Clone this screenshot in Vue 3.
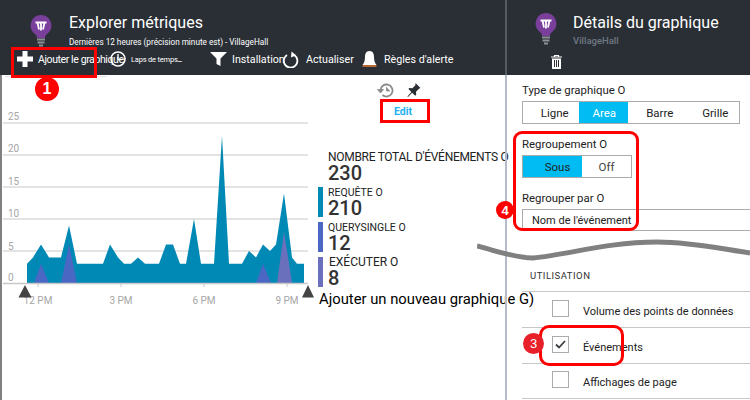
<script setup>
// valeurs lues sur le graphique : [x, valeur]
const total = [[27,3],[33,4],[41,6],[49,4],[61,4],[69,9],[77,3],[103,3],[110,6],[118,4],[124,3],[131,3],[138,4],[145,3],[159,3],[166,6],[173,6],[180,3],[186,3],[194,10],[201,3],[214,3],[222,23],[229,3],[242,3],[249,5],[256,4],[263,6],[270,5],[276,6],[284,14],[292,4],[297,3],[304,3]];
const peaks = [
  { from: 34, top: 41, to: 49, value: 3, color: "#4a67c4" },
  { from: 61, top: 69, to: 77, value: 6, color: "#4a67c4" },
  { from: 256, top: 263, to: 271, value: 3, color: "#4a67c4" },
  { from: 277, top: 284, to: 292, value: 8, color: "#6a70bb" },
];
const BASE = 283;
const UNIT = 6.4;
const y = (v) => BASE - v * UNIT;
const areaPoints = `27,${BASE} ` + total.map(([x, v]) => `${x},${y(v)}`).join(" ") + ` 304,${BASE}`;
const grid = [5, 10, 15, 20, 25].map(y);
const yLabels = [
  { t: "25", y: 120 }, { t: "20", y: 152 }, { t: "15", y: 185 },
  { t: "10", y: 217 }, { t: "5", y: 250 }, { t: "0", y: 281 },
];
const xLabels = [{ t: "12 PM", x: 38 }, { t: "3 PM", x: 121 }, { t: "6 PM", x: 204 }, { t: "9 PM", x: 287 }];
const legend = [
  { name: "REQUÊTE O", value: 210, color: "#0089b5" },
  { name: "QUERYSINGLE O", value: 12, color: "#4a67c4" },
  { name: "EXÉCUTER O", value: 8, color: "#6a70bb", large: true },
];
const chartTypes = ["Ligne", "Area", "Barre", "Grille"];
const usage = [
  { name: "Volume des points de données", checked: false },
  { name: "Événements", checked: true },
  { name: "Affichages de page", checked: false },
];
</script>

<template>
  <div class="page">
    <section class="blade blade-left">
      <header class="head">
        <div class="head-top">
          <svg class="bulb" width="22" height="34" viewBox="0 0 22 34">
            <path d="M11 1a10.500 10.500 0 0 0-6 19c1.500 1.200 2 2.500 2 4h8c0-1.500.5-2.800 2-4a10.500 10.500 0 0 0-6-19z" fill="#7a3f9a" />
            <path d="M5.500 8.500h11M7.500 8.500l1.500 7M14.500 8.500l-1.500 7M11 8.500v8" stroke="#fff" stroke-width="1.800" fill="none" />
            <path d="M7 25.500h8M7.500 28.500h7M9 31.500h4" stroke="#8b9096" stroke-width="2" />
          </svg>
          <div class="titles">
            <div class="title">Explorer métriques</div>
            <div class="subtitle">Dernières 12 heures (précision minute est) - VillageHall</div>
          </div>
        </div>
        <div class="toolbar">
          <div class="tool tool-add">
            <svg width="16" height="16" viewBox="0 0 16 16"><path d="M8 0v16M0 8h16" stroke="#fff" stroke-width="5" /></svg>
            <span class="tool-label add-label">Ajouter le graphique</span>
          </div>
          <div class="tool tool-time">
            <svg width="16" height="16" viewBox="0 0 16 16"><circle cx="8" cy="8" r="7" fill="none" stroke="#fff" stroke-width="1.600" /><path d="M8 3v5.500h4" fill="none" stroke="#fff" stroke-width="1.400" /></svg>
            <span class="time-label">Laps de temps</span>
            <span class="time-mark">_</span>
          </div>
          <div class="tool tool-filter">
            <svg width="17" height="14" viewBox="0 0 17 14"><path d="M0 0h17l-6.500 6.500V14l-4-2V6.500z" fill="#fff" /></svg>
            <span class="tool-label">Installation</span>
          </div>
          <div class="tool tool-refresh">
            <svg width="16" height="17" viewBox="0 0 16 17"><path d="M11.500 4.200A6.800 6.800 0 1 1 4 4" fill="none" stroke="#fff" stroke-width="1.800" /><path d="M8.500 0.500l4.500 3.700-5 2.300z" fill="#fff" /></svg>
            <span class="tool-label">Actualiser</span>
          </div>
          <div class="tool tool-bell">
            <svg width="15" height="17" viewBox="0 0 15 17"><path d="M7.500 0C4 0 3 3 3 6c0 4-1 6-2.500 8h14C13 12 12 10 12 6c0-3-1-6-4.500-6z" fill="#fff" /><path d="M0.500 15h14" stroke="#d9763a" stroke-width="1.600" /></svg>
            <span class="tool-label">Règles d'alerte</span>
          </div>
        </div>
      </header>

      <div class="content">
        <svg class="chart" width="316" height="245" viewBox="0 75 316 245">
          <line x1="5" x2="107" y1="76.500" y2="76.500" stroke="#e4e4e4" />
          <line v-for="g in grid" :key="g" x1="3" x2="308" :y1="g" :y2="g" stroke="#c8c8c8" stroke-width="1" />
          <polygon :points="areaPoints" fill="#0089b5" />
          <polygon
            v-for="p in peaks"
            :key="p.from"
            :points="`${p.from},${BASE} ${p.top},${y(p.value)} ${p.to},${BASE}`"
            :fill="p.color"
          />
          <line x1="3" x2="308" y1="283.500" y2="283.500" stroke="#c8c8c8" stroke-width="1.500" />
          <text v-for="l in yLabels" :key="l.t" x="8" :y="l.y" class="axis">{{ l.t }}</text>
          <g v-for="l in xLabels" :key="l.t">
            <line :x1="l.x" :x2="l.x" y1="284" y2="287" stroke="#c8c8c8" />
            <text :x="l.x" y="304" text-anchor="middle" class="axis">{{ l.t }}</text>
          </g>
          <polygon points="25,285 18.500,297.500 31.500,297.500" fill="#444" />
          <polygon points="308,285 302,297.500 314,297.500" fill="#444" />
        </svg>

        <div class="side">
          <div class="chart-tools">
            <svg width="17" height="15" viewBox="0 0 17 15"><path d="M3.500 7.500a6 6 0 1 1 2 4.500" fill="none" stroke="#8a8a8a" stroke-width="1.800" /><path d="M0.500 6.500h6L3.500 10zM9.500 4v4h3.500" fill="#8a8a8a" stroke="#8a8a8a" stroke-width="0.800" /></svg>
            <svg width="14" height="15" viewBox="0 0 14 15"><path d="M8.500 0l5 5-1.500.8-3 3 .2 3-1 1-3-3L1 14l-.6-.5 4-4.500-3-3 1-1 3 .2 3-3z" fill="#2a2f35" /></svg>
          </div>
          <div class="edit">Edit</div>
          <div class="legend">
            <div class="legend-total">
              <div class="legend-name total-name">NOMBRE TOTAL D'ÉVÉNEMENTS O</div>
              <div class="legend-value">230</div>
            </div>
            <div v-for="item in legend" :key="item.name" class="legend-row">
              <i class="legend-bar" :style="{ background: item.color }"></i>
              <div>
                <div class="legend-name" :class="{ 'name-large': item.large }">{{ item.name }}</div>
                <div class="legend-value">{{ item.value }}</div>
              </div>
            </div>
          </div>
          <div class="add-chart">Ajouter un nouveau graphique G)</div>
        </div>
      </div>
    </section>

    <section class="blade blade-right">
      <header class="head head-right">
        <div class="head-top">
          <svg class="bulb" width="22" height="34" viewBox="0 0 22 34">
            <path d="M11 1a10.500 10.500 0 0 0-6 19c1.500 1.200 2 2.500 2 4h8c0-1.500.5-2.800 2-4a10.500 10.500 0 0 0-6-19z" fill="#7a3f9a" />
            <path d="M5.500 8.500h11M7.500 8.500l1.500 7M14.500 8.500l-1.500 7M11 8.500v8" stroke="#fff" stroke-width="1.800" fill="none" />
            <path d="M7 25.500h8M7.500 28.500h7M9 31.500h4" stroke="#8b9096" stroke-width="2" />
          </svg>
          <div class="titles">
            <div class="title">Détails du graphique</div>
            <div class="resource">VillageHall</div>
          </div>
        </div>
        <svg class="trash" width="11" height="14" viewBox="0 0 11 14"><path d="M0 2h11M3.500 2V.5h4V2" fill="none" stroke="#fff" stroke-width="1.200" /><path d="M1 3.500h9V14H1z" fill="#fff" /><path d="M3.500 5v7M5.500 5v7M7.500 5v7" stroke="#2a2f35" stroke-width="1" /></svg>
      </header>

      <div class="form">
        <div class="field-label">Type de graphique O</div>
        <div class="segments">
          <div v-for="t in chartTypes" :key="t" class="segment" :class="{ active: t === 'Area' }">{{ t }}</div>
        </div>
        <div class="field-label group-label">Regroupement O</div>
        <div class="segments segments-small">
          <div class="segment on-dark">Sous</div>
          <div class="segment off">Off</div>
        </div>
        <div class="field-label by-label">Regrouper par O</div>
        <div class="select">Nom de l'événement</div>

        <div class="usage-title">UTILISATION</div>
        <div v-for="u in usage" :key="u.name" class="usage-row">
          <span class="check">
            <svg v-if="u.checked" width="11" height="9" viewBox="0 0 11 9"><path d="M1 4.500l3 3 6-6.500" fill="none" stroke="#3a3f45" stroke-width="1.800" /></svg>
          </span>
          <span class="usage-name">{{ u.name }}</span>
        </div>
      </div>
    </section>

    <!-- annotations posées par-dessus la capture -->
    <svg class="wave" width="280" height="30" viewBox="0 0 280 30">
      <path d="M0 11C20 16 38 23 56 23C90 20 130 7 180 7C215 7 245 14 273 18" fill="none" stroke="#808080" stroke-width="5" />
    </svg>
    <div class="mark mark-add"></div>
    <div class="mark mark-edit"></div>
    <div class="mark mark-group"></div>
    <div class="mark mark-events"></div>
    <div class="badge badge-1">1</div>
    <div class="badge badge-4">4</div>
    <div class="badge badge-3">3</div>
  </div>
</template>

<style>
html, body { margin: 0; background: #fff; }
</style>

<style scoped>
.page { position: relative; display: flex; width: 750px; height: 400px; overflow: hidden; background: #fff; font-family: Roboto, "Liberation Sans", sans-serif; color: #222; }
.blade { display: flex; flex-direction: column; }
.blade-left { width: 505px; flex: none; }
.blade-right { flex: 1; min-width: 0; }
.head { background: #2a2f35; height: 75px; flex: none; color: #fff; }
.head-right { border-left: 2px solid #565b62; }
.head-top { display: flex; height: 36px; padding: 12px 0 0 30px; }
.head-right .head-top { padding: 12px 0 0 28px; }
.bulb { flex: none; margin-top: 2px; }
.head-right .bulb { margin-top: 0; }
.titles { margin-left: 17px; }
.head-right .titles { margin-left: 16px; }
.title { font-size: 16px; line-height: 20px; margin-top: 1px; white-space: nowrap; }
.subtitle { font-size: 8.200px; line-height: 10px; margin-top: 4px; white-space: nowrap; }
.resource { font-size: 9.500px; line-height: 12px; margin-top: 2px; font-weight: 500; color: #6f7984; }
.toolbar { display: flex; align-items: center; height: 20px; margin-top: 1px; padding-left: 17px; }
.tool { display: flex; align-items: center; flex: none; white-space: nowrap; }
.tool svg { flex: none; }
.tool-label { font-size: 10.700px; }
.tool-add { width: 93px; }
.add-label { margin-left: 5px; font-size: 10.500px; letter-spacing: -0.400px; }
.tool-time { width: 100px; }
.time-label { font-size: 7.500px; letter-spacing: -0.200px; margin-left: 5px; }
.time-mark { font-size: 9px; transform: translateY(-1px); }
.tool-filter { width: 73px; }
.tool-filter .tool-label { margin-left: 5px; }
.tool-refresh { width: 79px; }
.tool-refresh .tool-label { margin-left: 7px; }
.tool-bell .tool-label { margin-left: 7px; }
.trash { display: block; margin: 7px 0 0 44px; }

.content { flex: 1; display: flex; border-left: 2px solid #808080; min-height: 0; }
.chart { display: block; flex: none; margin-left: -2px; }
.side { display: flex; flex-direction: column; min-width: 0; white-space: nowrap; }
.chart-tools { display: flex; align-items: center; gap: 13px; margin: 7px 0 0 61px; height: 16px; }
.edit { margin: 7px 0 0 78px; font-size: 10.500px; line-height: 14px; font-weight: 700; color: #1eb0f0; }
.legend { margin: 30px 0 0 2px; }
.legend-total { padding-left: 10px; height: 38px; }
.legend-row { display: flex; gap: 5px; height: 35px; }
.legend-bar { display: block; width: 5px; height: 30px; flex: none; }
.legend-name { font-size: 10.500px; line-height: 11px; color: #222; }
.name-large { font-size: 12px; padding-left: 1px; }
.total-name { font-size: 12px; line-height: 13px; letter-spacing: -0.300px; padding-top: 2px; margin-bottom: -1px; }
.legend-value { font-size: 20px; line-height: 20px; font-weight: 500; color: #333; }
.add-chart { margin: -2px 0 0 3px; font-size: 14.800px; color: #000; }

.form { position: relative; flex: 1; padding: 7px 0 0 15px; min-height: 0; border-left: 2px solid #b4bbcb; }
.field-label { font-size: 11.400px; line-height: 16px; }
.segments { display: flex; width: 218px; height: 23px; margin-top: 3px; border: 1px solid #ababab; box-sizing: border-box; }
.segment { flex: 1; display: flex; align-items: center; justify-content: center; font-size: 11.500px; padding-left: 8px; }
.segment.active { background: #00bcf2; color: #fff; padding-left: 2px; }
.segments-small { width: 110px; }
.on-dark { background: #00bcf2; padding-left: 10px; }
.off { color: #444; padding-left: 0; }
.group-label { margin-top: 12px; }
.by-label { margin-top: 12px; }
.select { height: 22px; margin-top: 3px; padding-left: 9px; line-height: 21px; font-size: 11px; border: 1px solid #ababab; border-right: 0; box-sizing: border-box; color: #222; white-space: nowrap; }
.usage-title { margin: 40px 0 0 8px; font-size: 9.500px; letter-spacing: 0.500px; line-height: 10px; height: 20px; color: #333; }
.usage-row { display: flex; align-items: center; height: 36px; box-sizing: border-box; border-top: 1px solid #c8c8c8; padding-left: 30px; }
.usage-row:last-child { border-bottom: 1px solid #c8c8c8; }
.check { display: flex; align-items: center; justify-content: center; width: 17px; height: 17px; margin-top: -3px; box-sizing: border-box; border: 1px solid #ababab; flex: none; }
.usage-name { margin: 3px 0 0 14px; font-size: 11px; white-space: nowrap; }

.axis { font-size: 10px; fill: #a6a6a6; font-family: Roboto, "Liberation Sans", sans-serif; }
.wave { position: absolute; left: 477px; top: 235px; }
.mark { position: absolute; box-sizing: border-box; }
.mark-add { left: 11px; top: 47px; width: 86px; height: 31px; border: 3px solid #f00; }
.mark-edit { left: 380px; top: 99px; width: 50px; height: 24px; border: 3px solid #f00; }
.mark-group { left: 513px; top: 131px; width: 126px; height: 100px; border: 3px solid #f00; border-radius: 9px; }
.mark-events { left: 539px; top: 325px; width: 85px; height: 41px; border: 3px solid #f00; border-radius: 10px; }
.badge { position: absolute; display: flex; align-items: center; justify-content: center; border-radius: 50%; color: #fff; background: #f00; font-family: "Liberation Sans", sans-serif; font-weight: 700; }
.badge-1 { left: 35px; top: 77px; width: 24px; height: 24px; font-size: 16px; }
.badge-4 { left: 496px; top: 201px; width: 18px; height: 18px; font-size: 13px; }
.badge-3 { left: 523px; top: 333px; width: 21px; height: 21px; font-size: 13px; font-weight: 400; background: #e8202a; }
</style>
